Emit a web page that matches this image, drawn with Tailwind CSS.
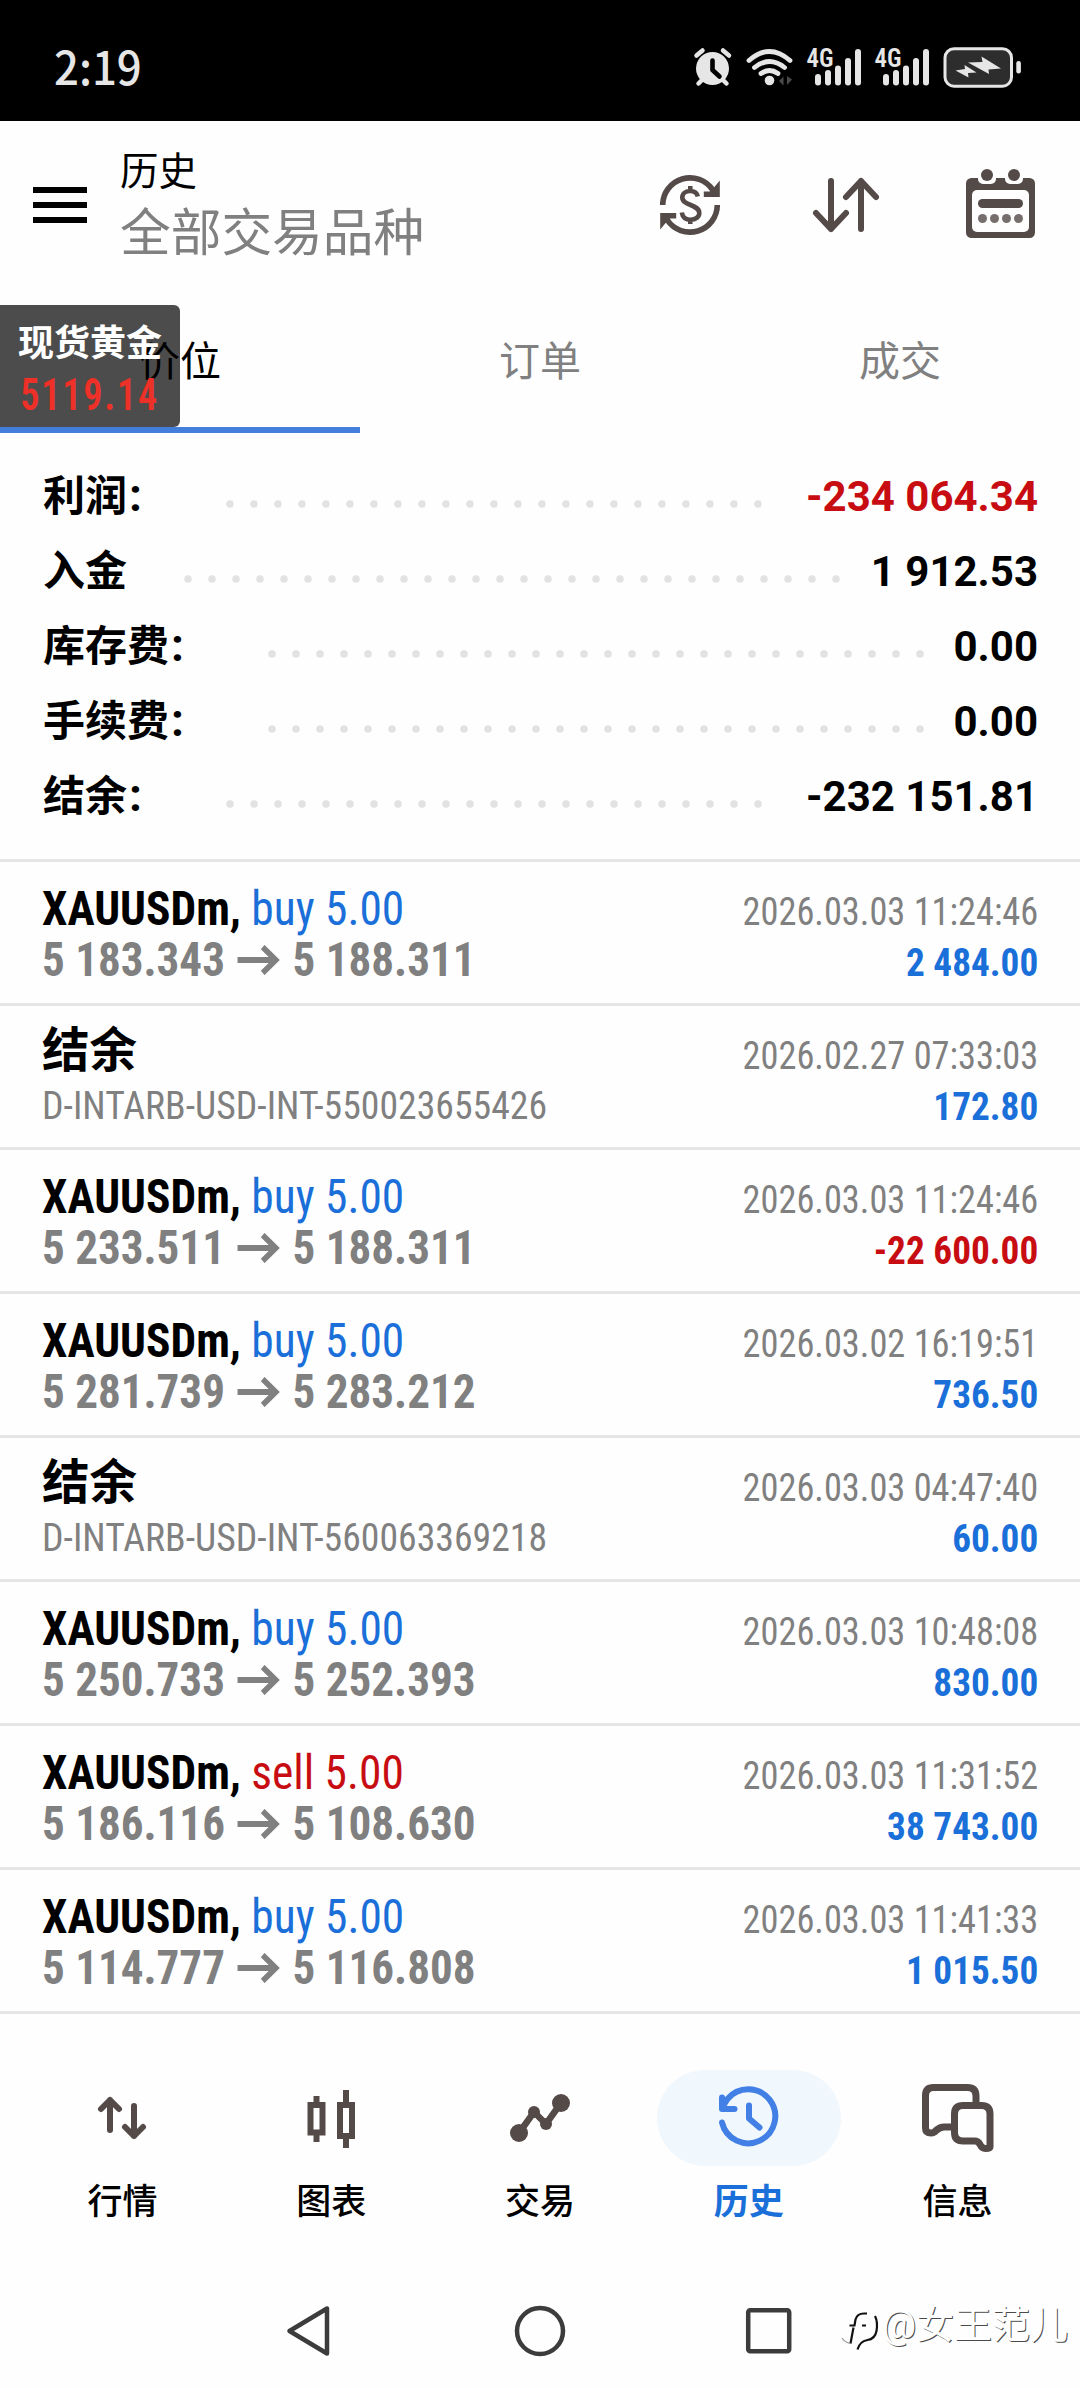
<!DOCTYPE html>
<html lang="zh-CN">
<head>
<meta charset="utf-8">
<title>历史</title>
<script src="https://cdn.jsdelivr.net/npm/@tailwindcss/browser@4"></script>
</head>
<body class="w-[1080px] h-[2388px] bg-[#fefefe] text-black overflow-hidden flex flex-col relative font-['Roboto','Noto_Sans_CJK_SC',sans-serif]">

<!-- status bar -->
<div class="h-[121px] shrink-0 bg-black flex items-center justify-between pl-[54px] pr-[58px] pt-[14px]">
  <span class="text-[46px] leading-none font-medium text-[#e6e6e6] font-['Noto_Sans_CJK_SC',sans-serif] origin-left scale-x-[0.95] mb-[6px]">2:19</span>
  <svg class="overflow-visible" width="328" height="44" viewBox="694 46 328 44" fill="#e6e6e6">
    <circle cx="712.5" cy="68.500" r="16.500"/>
    <path d="M696.500 55.500l6-5M729 55.500l-6-5M702 80l-3.500 3.500M723 80l3.500 3.500" stroke="#e6e6e6" stroke-width="4.500" stroke-linecap="round"/>
    <path d="M712.500 60.500v9.500l7 6.500" fill="none" stroke="#000" stroke-width="4.600" stroke-linecap="round" stroke-linejoin="round"/>
    <g fill="none" stroke="#e6e6e6" stroke-width="4.800" stroke-linecap="round">
      <path d="M749 60.500q20.500-18 41 0M754.500 67.500q15-12 30 0M761 73.500q8.500-6 17 0"/>
    </g>
    <circle cx="769.500" cy="80.500" r="4.800"/>
    <path d="M779 81l4.500-4.500v9zM792 79.500l-5-3.500v9z" fill="#4a4a4a"/>
    <g id="sig">
      <text x="806.500" y="66.500" font-size="25" font-weight="600" textLength="27" lengthAdjust="spacingAndGlyphs" font-family="Roboto Condensed, sans-serif">4G</text>
      <rect x="815" y="74" width="6" height="11.500" rx="3"/>
      <rect x="825" y="70" width="6" height="15.500" rx="3"/>
      <rect x="835" y="65.500" width="6" height="20" rx="3"/>
      <rect x="845" y="58" width="6" height="27.500" rx="3"/>
      <rect x="855" y="49" width="6" height="36.500" rx="3"/>
    </g>
    <use href="#sig" x="68"/>
    <rect x="945" y="48.700" width="66.500" height="37.500" rx="9" fill="#2d2d2d" stroke="#e6e6e6" stroke-width="3"/>
    <rect x="1016.300" y="61" width="4.600" height="12.500" rx="2.300"/>
    <path d="M955.500 70.500l9.500-1.500-.5-4 12 7.500-8.500.5.500 4.500zM968 62.500l14.500-.5-1-5.500 19.500 12-12.500 1 .5 4.500z"/>
  </svg>
</div>

<!-- toolbar -->
<header class="h-[184px] shrink-0 flex items-start pl-[33px]">
  <div class="w-[54px] mt-[66px] flex flex-col gap-[9px]">
    <i class="h-1.5 bg-black"></i><i class="h-1.5 bg-black"></i><i class="h-1.5 bg-black"></i>
  </div>
  <div class="ml-[33px] mt-[26px] flex flex-col grow">
    <h1 class="text-[38.500px] leading-[50px]">历史</h1>
    <p class="text-[50.700px] leading-[70px] mt-0.5 text-[#808080]">全部交易品种</p>
  </div>
  <svg class="mt-[44px] mr-[42px]" width="378" height="76" viewBox="660 165 378 76" fill="none" stroke="#544a48">
    <path d="M662.700 205a27.300 27.300 0 0 1 50-15M717.300 205a27.300 27.300 0 0 1-50 15" stroke-width="5.600"/>
    <path d="M719.800 180.500v16.500h-16v-5.500h6l5-5zM660.200 229.500v-16.500h16v5.500h-6l-5 5z" fill="#544a48" stroke="none"/>
    <path d="M697.800 196.500c-1-4-4-5.500-7.500-5.500-4.500 0-8 2.700-8 6.500 0 8.500 17 6.500 17 15.500 0 4-4 6.800-8.500 6.800-5 0-8.300-2.800-9-7.300M690.300 186v5M690.300 219v5" stroke-width="4.600"/>
    <g stroke-width="6" stroke-linecap="round" stroke-linejoin="round">
      <path d="M831 181v48M816 213l15 16 15-16M861 229v-48M846 197l15-16 15 16"/>
    </g>
    <g stroke="none" fill="#544a48">
      <rect x="966" y="178" width="69" height="60" rx="5.500"/>
      <rect x="972" y="190" width="57" height="42" rx="5" fill="#fefefe"/>
      <path d="M978 178v1a5 5 0 0 0 5 5h8a5 5 0 0 0 5-5v-1zM1005 178v1a5 5 0 0 0 5 5h8a5 5 0 0 0 5-5v-1z" fill="#fefefe"/>
      <circle cx="987" cy="175" r="6"/><circle cx="1014" cy="175" r="6"/>
      <rect x="978" y="199" width="45" height="9" rx="4.500"/>
      <g fill="#766e6c"><circle cx="982.500" cy="218.500" r="4.500"/><circle cx="994.500" cy="218.500" r="4.500"/><circle cx="1006.500" cy="218.500" r="4.500"/><circle cx="1018.500" cy="218.500" r="4.500"/></g>
    </g>
  </svg>
</header>

<!-- tabs -->
<nav class="h-32 shrink-0 grid grid-cols-3 text-[41px] leading-[115px] text-center text-[#808080]">
  <span class="text-black border-b-[6px] border-[#447edc]">价位</span><span>订单</span><span>成交</span>
</nav>

<!-- floating gold quote -->
<aside class="absolute left-0 top-[305px] w-[180px] h-[122px] rounded-r-[6px] bg-black/70 flex flex-col items-center pt-[16px]">
  <span class="text-[36px] leading-[46px] font-bold text-white">现货黄金</span>
  <span class="text-[44px] leading-[56px] font-semibold tracking-[2px] text-[#ee3128] font-['Roboto_Condensed'] scale-x-[0.87]">5119.14</span>
</aside>

<!-- account summary -->
<section id="summary" class="h-[426px] shrink-0 pt-[26px] text-[42px] font-bold"></section>

<!-- deals -->
<main id="deals" class="h-[1155px] shrink-0 font-['Roboto_Condensed','Noto_Sans_CJK_SC',sans-serif]"></main>

<!-- bottom navigation -->
<nav class="h-[234px] shrink-0 px-[18px] pt-[56px] grid grid-cols-5 text-[35px] font-medium text-center">
  <div class="flex flex-col items-center">
    <svg width="184" height="96" viewBox="30 2070 184 96" fill="none" stroke="#544a48" stroke-width="6" stroke-linecap="round" stroke-linejoin="round"><path d="M110 2130v-30M101 2109l9-9 9 9M134 2106v30M125 2127l9 9 9-9"/></svg>
    <span class="mt-[11px] leading-[52px]">行情</span>
  </div>
  <div class="flex flex-col items-center">
    <svg width="184" height="96" viewBox="239 2070 184 96" fill="none" stroke="#544a48" stroke-width="6"><path d="M310.500 2105h12v27.500h-12zM340 2105h12v31h-12zM316.500 2096v8M316.500 2134v8M346 2090v13M346 2137v11"/></svg>
    <span class="mt-[11px] leading-[52px]">图表</span>
  </div>
  <div class="flex flex-col items-center">
    <svg width="184" height="96" viewBox="448 2070 184 96" fill="#544a48"><path d="M519 2133l15-21 12 12 15-21" fill="none" stroke="#544a48" stroke-width="6.500"/><circle cx="519" cy="2133" r="9"/><circle cx="534" cy="2112" r="6"/><circle cx="546" cy="2124" r="6"/><circle cx="561" cy="2103" r="9"/></svg>
    <span class="mt-[11px] leading-[52px]">交易</span>
  </div>
  <div class="flex flex-col items-center">
    <svg class="rounded-full bg-[#f0f7fd]" width="184" height="96" viewBox="657 2070 184 96" fill="none" stroke="#4380e6" stroke-width="6" stroke-linecap="round" stroke-linejoin="round"><path d="M722 2122.500a27 27 0 1 0 5.500-23.500l-5 8"/><path d="M722 2097.500v11.500h12.500"/><path d="M749 2105.500v13l10.500 9"/></svg>
    <span class="mt-[11px] leading-[52px] font-bold text-[#1a6fd9]">历史</span>
  </div>
  <div class="flex flex-col items-center">
    <svg width="184" height="96" viewBox="866 2070 184 96" fill="none" stroke="#544a48" stroke-width="7" stroke-linejoin="round"><path d="M976 2105v-9q0-8.500-8.500-8.500h-34q-8 0-8 8v32.500q0 5 5.500 5 3 0 5-2.500 4-3.500 8-3.500h11"/><path d="M963 2105.500h18.500q8.500 0 8.500 8.500v33q0 1.500-4.500 1.500-3.500 0-5.500-4-1.500-3.500-5.500-3.500h-11.500q-8.500 0-8.500-8.500v-18.500q0-8.500 8.500-8.500z"/></svg>
    <span class="mt-[11px] leading-[52px]">信息</span>
  </div>
</nav>

<!-- system navigation -->
<div class="grow flex items-start pt-14 pl-[285px]">
  <svg width="508" height="54" viewBox="285 2304 508 54" fill="none" stroke="#3c3c3c" stroke-width="4.500" stroke-linejoin="round"><path d="M289.500 2331l37.500-22.500v45z"/><circle cx="540" cy="2331" r="23"/><rect x="748.200" y="2310.200" width="41" height="41" rx="2"/></svg>
</div>

<!-- author mark -->
<div class="absolute left-[842px] top-[2298px] flex items-center text-white">
  <svg class="overflow-visible mt-1.5" width="40" height="44" viewBox="842 2308 40 44" fill="none" stroke="#111" stroke-width="2.200"><path d="M867 2315.500h-3q-7 0-8.500 6l-1 6h-5M853.500 2329.500l-3 16M862 2327.500h4M875 2318q3 6 1.500 15-1.500 8-9 9-8 1.500-10 9.500"/><path d="M842 2340q2.500 4 8 5.500" stroke="#999" stroke-width="1.200"/></svg>
  <span class="text-[38px] leading-[54px] [text-shadow:1px_1px_0.500px_#4a4a4a]">@女王范儿</span>
</div>

<script>
const sum = [['利润:','-234 064.34',23,230,'text-[#c80d12]'],['入金','1 912.53',28,188,''],['库存费:','0.00',28,272,''],['手续费:','0.00',28,272,''],['结余:','-232 151.81',23,230,'']];
document.getElementById('summary').innerHTML = sum.map(([l,v,n,x,c]) =>
  `<div class="relative h-[75px] flex items-center justify-between pl-[43px] pr-[42px]"><span>${l.replace(':','<span class="pl-[2px] text-[46px] leading-none">:</span>')}</span><svg class="absolute left-0 top-0" width="1000" height="75"><line x1="${x}" x2="${x+(n-1)*24+1}" y1="45" y2="45" stroke="#e2e2e2" stroke-width="7.500" stroke-linecap="round" stroke-dasharray="0 24"/></svg><span class="${c}">${v}</span></div>`).join('');
const B='text-[#1a6fd9]', R='text-[#c80d12]';
const deals = [
 ['buy','5 183.343','5 188.311','2026.03.03 11:24:46','2 484.00'],
 ['','D-INTARB-USD-INT-550023655426','','2026.02.27 07:33:03','172.80'],
 ['buy','5 233.511','5 188.311','2026.03.03 11:24:46','-22 600.00'],
 ['buy','5 281.739','5 283.212','2026.03.02 16:19:51','736.50'],
 ['','D-INTARB-USD-INT-560063369218','','2026.03.03 04:47:40','60.00'],
 ['buy','5 250.733','5 252.393','2026.03.03 10:48:08','830.00'],
 ['sell','5 186.116','5 108.630','2026.03.03 11:31:52','38 743.00'],
 ['buy','5 114.777','5 116.808','2026.03.03 11:41:33','1 015.50']];
const arrow = '<svg class="mx-[13px]" width="46" height="30" viewBox="0 0 46 30" fill="none" stroke="#808080" stroke-width="5.800"><path d="M0 15h41M27 2l14 13-14 13"/></svg>';
document.getElementById('deals').innerHTML = deals.map(([s,a,b,d,v]) =>
  `<div class="h-36 border-t-[3px] border-[#e6e6e6] pl-[42px] pr-[42px] flex justify-between whitespace-nowrap">
    <div class="pt-[20px]">${s
      ? `<p class="text-[48px] leading-[51px] mt-[1px] origin-left scale-x-[0.946]"><b>XAUUSDm,</b> <span class="${s=='buy'?B:R}">${s} 5.00</span></p><p class="text-[48px] leading-[51px] font-bold text-[#808080] flex items-center origin-left scale-x-[0.939]"><span>${a}</span>${arrow}<span>${b}</span></p>`
      : `<p class="text-[47.500px] leading-[51px] font-bold">结余</p><p class="text-[39px] leading-[51px] mt-1 text-[#808080] origin-left scale-x-[0.967]">${a}</p>`}</div>
    <div class="pt-[25px] text-right text-[39px] leading-[51px]"><p class="text-[#808080] origin-right scale-x-[0.932]">${d}</p><p class="font-bold origin-right scale-x-[0.955] ${v[0]=='-'?R:B}">${v}</p></div>
  </div>`).join('') + '<div class="h-[3px] bg-[#e6e6e6]"></div>';
</script>
</body>
</html>
